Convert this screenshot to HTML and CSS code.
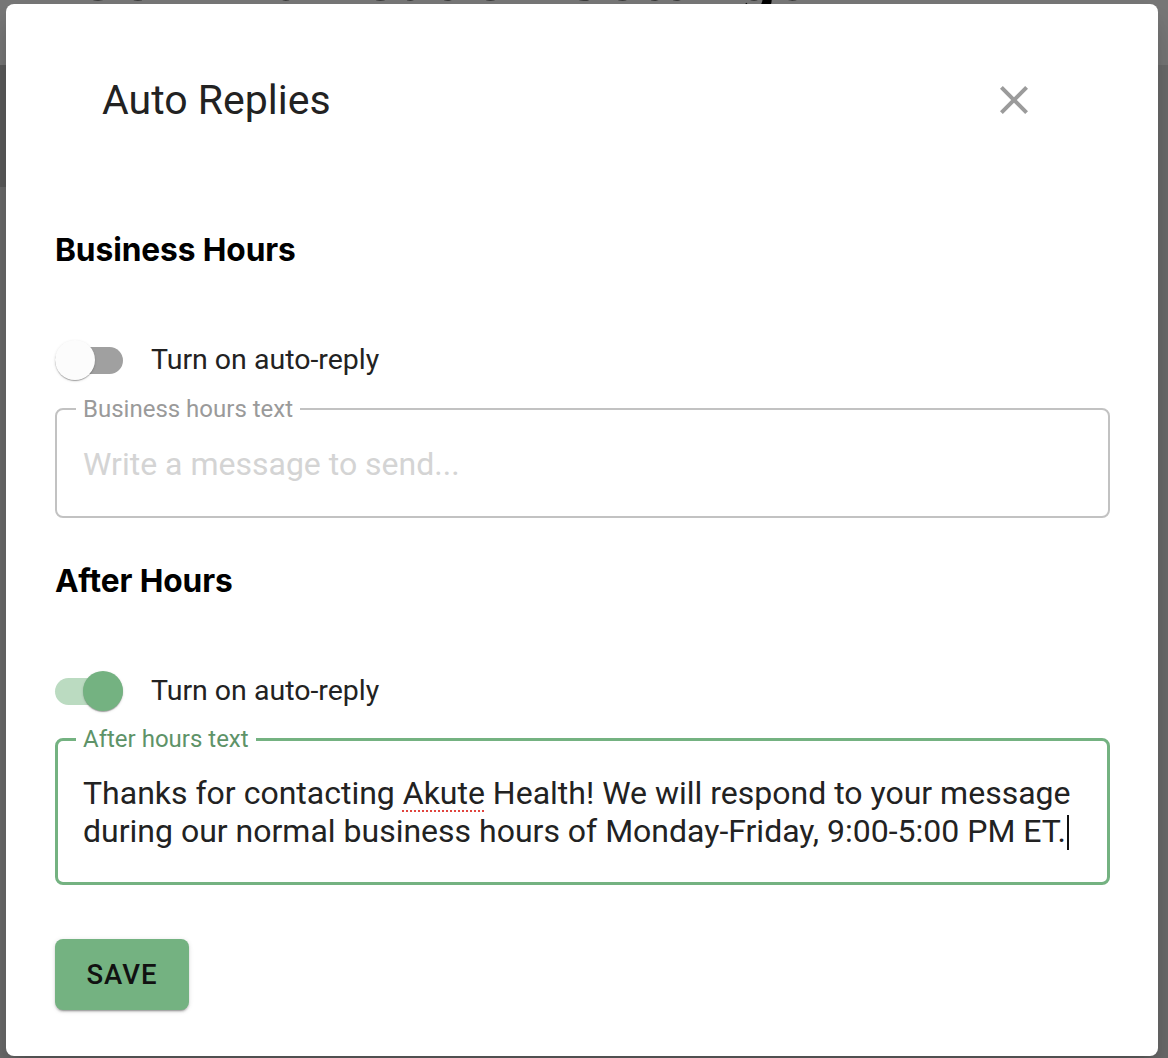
FILE: index.html
```html
<!DOCTYPE html>
<html lang="en">
<head>
<meta charset="utf-8">
<title>Auto Replies</title>
<link rel="stylesheet" href="styles.css">
</head>
<body>
  <div class="page">
    <header class="page-header">
      <h1 class="page-title">Communication Settings</h1>
    </header>
  </div>

  <div class="dialog" role="dialog" aria-labelledby="dlg-title">
    <div class="dialog-header">
      <h2 class="dialog-title" id="dlg-title">Auto Replies</h2>
      <button class="close-btn" aria-label="Close">
        <svg width="48" height="48" viewBox="0 0 24 24" aria-hidden="true">
          <path d="M19 6.41L17.59 5 12 10.59 6.41 5 5 6.41 10.59 12 5 17.59 6.41 19 12 13.41 17.59 19 19 17.59 13.41 12z" fill="#9b9b9b"/>
        </svg>
      </button>
    </div>

    <section class="section section-first">
      <h3 class="section-title">Business Hours</h3>
      <label class="toggle-row">
        <span class="switch">
          <span class="track"></span>
          <span class="thumb"></span>
        </span>
        <span class="toggle-label">Turn on auto-reply</span>
      </label>
      <fieldset class="field">
        <legend class="field-label">Business hours text</legend>
        <div class="field-input placeholder">Write a message to send...</div>
      </fieldset>
    </section>

    <section class="section">
      <h3 class="section-title">After Hours</h3>
      <label class="toggle-row">
        <span class="switch switch-on">
          <span class="track"></span>
          <span class="thumb"></span>
        </span>
        <span class="toggle-label">Turn on auto-reply</span>
      </label>
      <fieldset class="field field-focused">
        <legend class="field-label">After hours text</legend>
        <div class="field-input">Thanks for contacting <span class="misspelled">Akute</span> Health! We will respond to your message<br>during our normal business hours of Monday-Friday, 9:00-5:00 PM ET.<span class="caret"></span></div>
      </fieldset>
    </section>

    <button class="save-btn">SAVE</button>
  </div>
</body>
</html>
```

FILE: styles.css
```css
* {
  box-sizing: border-box;
}

html, body {
  margin: 0;
  padding: 0;
}

body {
  width: 1168px;
  height: 1058px;
  overflow: hidden;
  position: relative;
  background-color: #6b6b6b;
  background-image: linear-gradient(#5b5b5b, #5b5b5b);
  background-repeat: no-repeat;
  background-position: 0 65px;
  background-size: 6px 122px;
  font-family: Roboto, "Noto Sans", "Liberation Sans", sans-serif;
  color: #222;
}

/* page behind the modal */
.page-header {
  height: 65px;
  background: #777777;
  overflow: hidden;
  padding-left: 76px;
}

.page-title {
  margin: -57px 0 0 0;
  font-family: Roboto, "Liberation Sans", sans-serif;
  font-weight: 700;
  font-size: 66px;
  line-height: 70px;
  color: #000;
  white-space: nowrap;
}

/* dialog */
.dialog {
  position: absolute;
  top: 4px;
  left: 6px;
  width: 1152px;
  height: 1052px;
  background: #fff;
  border-radius: 8px;
  padding: 72px 48px 0 49px;
  box-shadow: 0 11px 15px -7px rgba(0,0,0,.2), 0 24px 38px 3px rgba(0,0,0,.14);
}

.dialog-header {
  display: flex;
  align-items: center;
  justify-content: space-between;
  height: 48px;
  margin: 0 72px 0 47px;
}

.dialog-title {
  margin: 0;
  font-family: Roboto, "Noto Sans", sans-serif;
  font-weight: 400;
  font-size: 41px;
  line-height: 48px;
  color: #222;
}

.close-btn {
  width: 48px;
  height: 48px;
  padding: 0;
  border: 0;
  background: transparent;
  display: flex;
  align-items: center;
  justify-content: center;
  cursor: pointer;
}

.close-btn svg {
  display: block;
}

/* sections */
.section-first {
  margin-top: 109px;
}

.section {
  display: flex;
  flex-direction: column;
}

.section + .section {
  margin-top: 46px;
}

.section-title {
  margin: 0;
  font-family: Inter, "Noto Sans", sans-serif;
  font-weight: 700;
  font-size: 31.7px;
  line-height: 34px;
  color: #000;
  letter-spacing: -0.1px;
}

/* toggle */
.toggle-row {
  display: flex;
  align-items: center;
  height: 40px;
  margin-top: 73px;
}

.switch {
  position: relative;
  width: 68px;
  height: 40px;
  flex: none;
  display: flex;
  align-items: center;
}

.track {
  display: block;
  width: 68px;
  height: 27px;
  border-radius: 14px;
  background: #a0a0a0;
}

.thumb {
  position: absolute;
  top: 0;
  left: 0;
  width: 40px;
  height: 40px;
  border-radius: 50%;
  background: #fcfcfc;
  box-shadow: 0 2px 1px -1px rgba(0,0,0,.2), 0 1px 1px 0 rgba(0,0,0,.14), 0 1px 3px 0 rgba(0,0,0,.12);
}

.switch-on .track {
  background: #bbdbc1;
}

.switch-on .thumb {
  left: 28px;
  background: #74b281;
}

.toggle-label {
  margin-left: 28px;
  font-size: 28.5px;
  line-height: 40px;
  color: #222;
}

/* outlined fields */
.field {
  margin: 15px 0 0 0;
  padding: 0 26px;
  border: 2px solid #c2c2c2;
  border-radius: 8px;
  min-width: 0;
}

.field-label {
  margin-left: -7px;
  padding: 0 7px;
  font-size: 24px;
  line-height: 28px;
  color: #9a9a9a;
}

.field-input {
  padding: 22px 0 33px;
  font-size: 32px;
  line-height: 38px;
  color: #222;
  white-space: nowrap;
}

.placeholder {
  color: #d4d4d4;
}

.field-focused {
  border: 3px solid #74b281;
  padding: 0 25px;
  margin-top: 14px;
}

.field-focused .field-label {
  color: #5e9368;
}

.field-focused .field-input {
  padding-top: 21px;
  padding-bottom: 32px;
}

.misspelled {
  text-decoration: underline dotted #e0443e;
  text-decoration-thickness: 2px;
  text-underline-offset: 6px;
}

.caret {
  display: inline-block;
  width: 2px;
  height: 35px;
  margin-left: 1px;
  background: #111;
  vertical-align: -8px;
}

/* save */
.save-btn {
  margin-top: 54px;
  width: 134px;
  height: 71px;
  padding: 0;
  border: 0;
  border-radius: 8px;
  background: #74b281;
  color: #111;
  font-family: Roboto, "Noto Sans", sans-serif;
  font-weight: 500;
  font-size: 27.5px;
  letter-spacing: 1px;
  box-shadow: 0 3px 1px -2px rgba(0,0,0,.2), 0 2px 2px 0 rgba(0,0,0,.14), 0 1px 5px 0 rgba(0,0,0,.12);
  cursor: pointer;
}
```
